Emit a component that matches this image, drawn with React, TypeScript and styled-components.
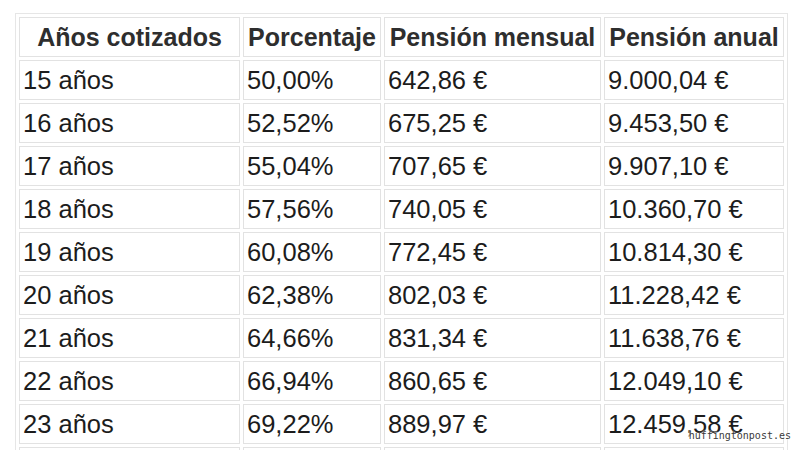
import React from "react";
import styled, { createGlobalStyle } from "styled-components";

const Global = createGlobalStyle`
  html, body { margin: 0; padding: 0; background: #ffffff; }
  body { width: 800px; height: 450px; overflow: hidden; position: relative; }
`;

const Page = styled.div`
  position: relative;
  width: 800px;
  height: 450px;
  padding: 13px 0 0 15px;
  box-sizing: border-box;
  overflow: hidden;
  font-family: "Liberation Sans", Arial, Helvetica, sans-serif;
`;

const Table = styled.table`
  border-collapse: separate;
  border-spacing: 3px;
  border: 1px solid #e6e6e6;
  table-layout: fixed;
`;

const Th = styled.th<{ $w: number }>`
  box-sizing: border-box;
  width: ${(p) => p.$w}px;
  height: 40px;
  padding: 0 2px;
  border: 1px solid #e2e2e2;
  font-size: 25px;
  line-height: 36px;
  font-weight: 700;
  color: #2e2e2e;
  text-align: center;
  white-space: nowrap;
  overflow: hidden;
`;

const Td = styled.td`
  box-sizing: border-box;
  height: 40px;
  padding: 0 3px;
  border: 1px solid #e2e2e2;
  font-size: 25.5px;
  line-height: 38px;
  color: #1c1c1c;
  text-align: left;
  white-space: nowrap;
  overflow: hidden;
`;

const Watermark = styled.div`
  position: absolute;
  right: 9px;
  bottom: 8px;
  font-family: "DejaVu Sans Mono", "Liberation Mono", monospace;
  font-size: 10px;
  line-height: 12px;
  color: #3a3a3a;
  text-shadow: 0 0 2px #fff, 0 0 2px #fff;
`;

const rows: [string, string, string, string][] = [
  ["15 años", "50,00%", "642,86 €", "9.000,04 €"],
  ["16 años", "52,52%", "675,25 €", "9.453,50 €"],
  ["17 años", "55,04%", "707,65 €", "9.907,10 €"],
  ["18 años", "57,56%", "740,05 €", "10.360,70 €"],
  ["19 años", "60,08%", "772,45 €", "10.814,30 €"],
  ["20 años", "62,38%", "802,03 €", "11.228,42 €"],
  ["21 años", "64,66%", "831,34 €", "11.638,76 €"],
  ["22 años", "66,94%", "860,65 €", "12.049,10 €"],
  ["23 años", "69,22%", "889,97 €", "12.459,58 €"],
  ["", "", "", ""],
];

export default function App() {
  return (
    <>
      <Global />
      <Page>
        <Table>
          <thead>
            <tr>
              <Th $w={221}>Años cotizados</Th>
              <Th $w={138}>Porcentaje</Th>
              <Th $w={217}>Pensión mensual</Th>
              <Th $w={180}>Pensión anual</Th>
            </tr>
          </thead>
          <tbody>
            {rows.map((r, ri) => (
              <tr key={ri}>
                {r.map((c, i) => (
                  <Td key={i}>{c}</Td>
                ))}
              </tr>
            ))}
          </tbody>
        </Table>
        <Watermark>huffingtonpost.es</Watermark>
      </Page>
    </>
  );
}
